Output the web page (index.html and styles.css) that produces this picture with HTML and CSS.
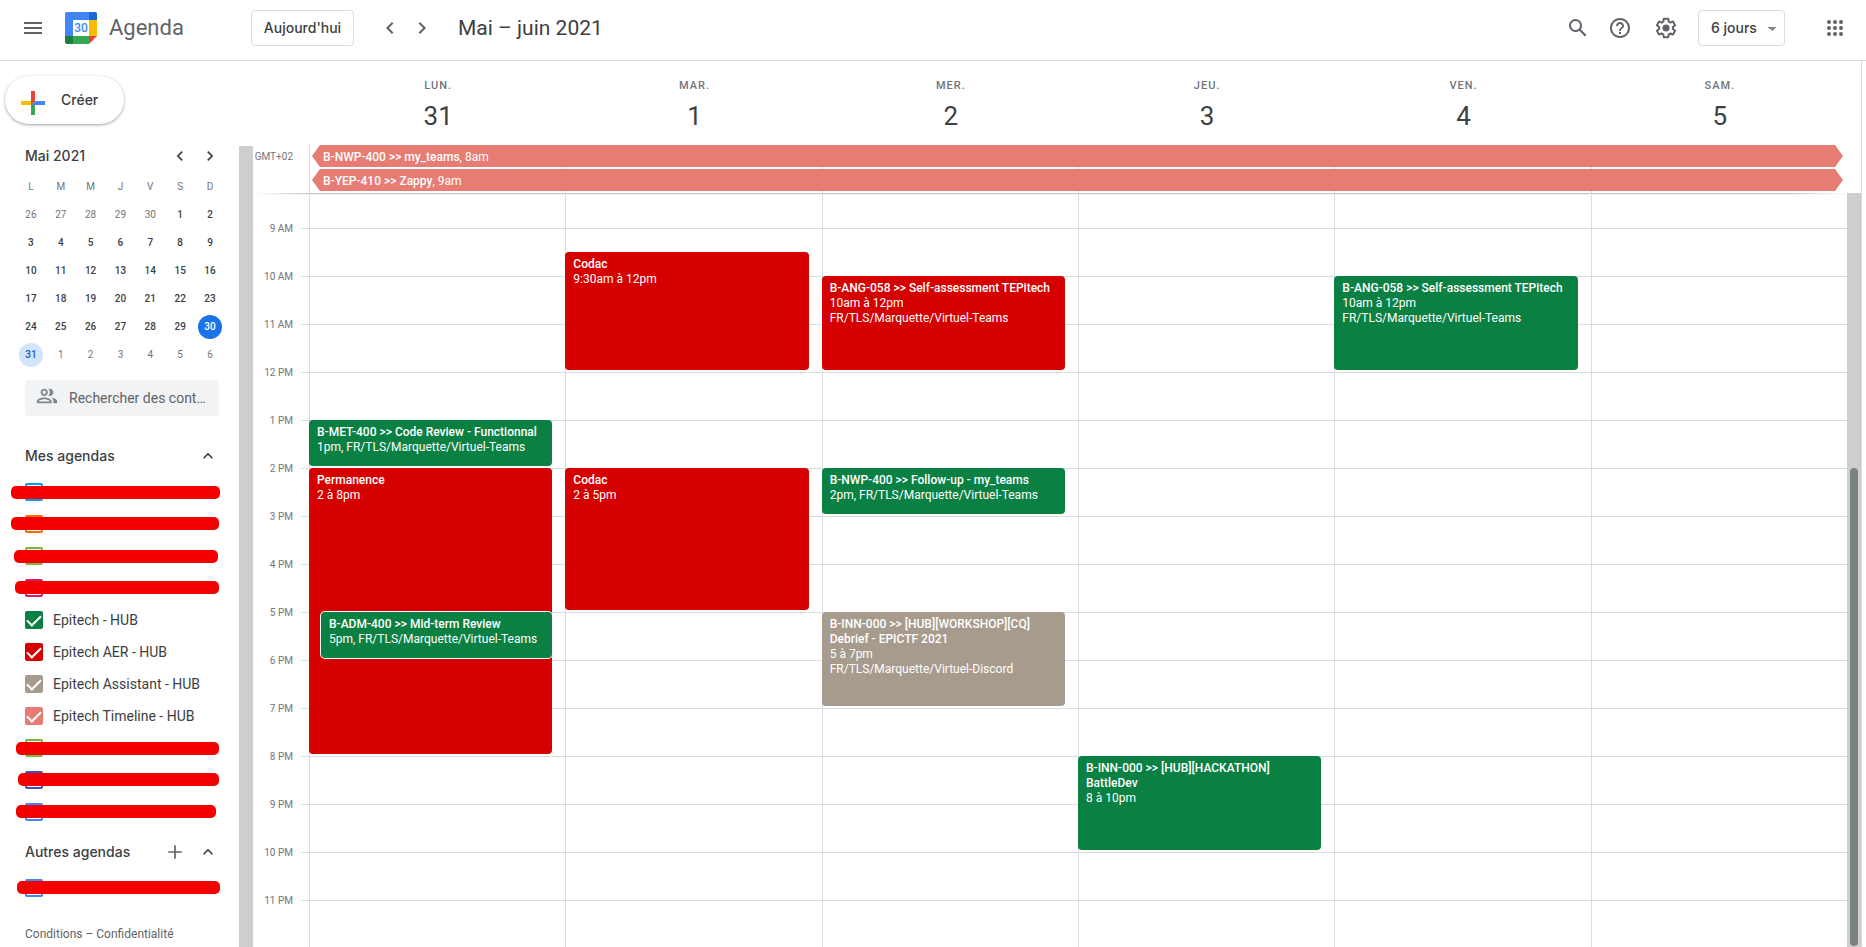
FILE: index.html
```html
<!DOCTYPE html>
<html lang="fr">
<head>
<meta charset="utf-8">
<title>Agenda – Mai – juin 2021</title>
<meta name="viewport" content="width=device-width, initial-scale=1">
<link rel="stylesheet" href="styles.css">
</head>
<body>
<header class="topbar">
  <button class="icon-btn menu-btn" aria-label="Menu principal">
    <svg viewBox="0 0 24 24"><path d="M3 18h18v-2H3v2zm0-5h18v-2H3v2zm0-7v2h18V6H3z"/></svg>
  </button>
  <svg class="logo" viewBox="0 0 32 32" aria-hidden="true">
    <path fill="#4285f4" d="M2 0h22v8H8v16H0V2a2 2 0 0 1 2-2z"/>
    <path fill="#1967d2" d="M24 0h6a2 2 0 0 1 2 2v6h-8z"/>
    <path fill="#fbbc04" d="M24 8h8v16h-8z"/>
    <path fill="#34a853" d="M8 24h16v8H8z"/>
    <path fill="#188038" d="M0 24h8v8H2a2 2 0 0 1-2-2z"/>
    <path fill="#ea4335" d="M24 24h8l-8 8z"/>
    <path fill="#fff" d="M8 8h16v16H8z"/>
    <text class="logo-text" x="16" y="20" text-anchor="middle">30</text>
  </svg>
  <span class="brand">Agenda</span>
  <button class="today-btn">Aujourd'hui</button>
  <div class="pager">
    <button class="icon-btn" aria-label="Période précédente"><svg viewBox="0 0 24 24"><path d="M15.41 7.41L14 6l-6 6 6 6 1.41-1.41L10.83 12z"/></svg></button>
    <button class="icon-btn" aria-label="Période suivante"><svg viewBox="0 0 24 24"><path d="M10 6L8.59 7.41 13.17 12l-4.58 4.59L10 18l6-6z"/></svg></button>
  </div>
  <h1 class="period">Mai – juin 2021</h1>
  <div class="tools">
    <button class="icon-btn" aria-label="Rechercher"><svg viewBox="0 0 24 24"><path d="M20.49 19l-5.73-5.73C15.53 12.2 16 10.91 16 9.5A6.5 6.5 0 1 0 9.5 16c1.41 0 2.7-.47 3.77-1.24L19 20.49 20.49 19zM5 9.5C5 7.01 7.01 5 9.5 5S14 7.01 14 9.5 11.99 14 9.5 14 5 11.99 5 9.5z"/></svg></button>
    <button class="icon-btn help-btn" aria-label="Aide"><svg viewBox="0 0 24 24"><path d="M11 18h2v-2h-2v2zm1-16C6.48 2 2 6.48 2 12s4.48 10 10 10 10-4.480 10-10S17.520 2 12 2zm0 18c-4.410 0-8-3.590-8-8s3.590-8 8-8 8 3.590 8 8-3.590 8-8 8zm0-14c-2.210 0-4 1.790-4 4h2c0-1.100.9-2 2-2s2 .9 2 2c0 2-3 1.750-3 5h2c0-2.250 3-2.500 3-5 0-2.210-1.790-4-4-4z"/></svg></button>
    <button class="icon-btn gear-btn" aria-label="Paramètres"><svg viewBox="0 0 24 24"><path d="M13.85 22.250h-3.700c-.74 0-1.360-.54-1.450-1.270l-.27-1.890c-.27-.14-.53-.29-.79-.46l-1.800.72c-.7.260-1.470-.03-1.810-.65L2.200 15.530c-.35-.66-.2-1.440.36-1.880l1.530-1.190c-.01-.15-.02-.3-.02-.46 0-.15.01-.31.02-.46l-1.520-1.190c-.59-.45-.74-1.260-.37-1.880l1.850-3.190c.34-.62 1.110-.9 1.790-.63l1.810.73c.26-.17.52-.32.78-.46l.27-1.910c.09-.7.710-1.250 1.440-1.250h3.700c.74 0 1.360.54 1.450 1.270l.27 1.890c.27.14.53.29.79.46l1.800-.72c.71-.26 1.480.03 1.820.65l1.840 3.180c.36.66.2 1.440-.36 1.880l-1.520 1.190c.01.15.02.3.02.46s-.01.31-.02.46l1.520 1.190c.56.45.72 1.230.37 1.860l-1.860 3.220c-.34.62-1.110.9-1.800.63l-1.800-.72c-.26.17-.52.32-.78.46l-.27 1.910c-.1.680-.72 1.220-1.460 1.220zm-3.230-2h2.760l.37-2.550.53-.22c.44-.18.88-.44 1.340-.78l.45-.34 2.380.96 1.380-2.400-2.030-1.580.07-.56c.03-.26.06-.51.06-.78s-.03-.53-.06-.78l-.07-.56 2.030-1.580-1.390-2.400-2.390.96-.45-.35c-.42-.32-.87-.58-1.330-.77l-.52-.22-.37-2.550h-2.760l-.37 2.550-.53.21c-.44.19-.88.44-1.340.79l-.45.33-2.380-.95-1.390 2.390 2.030 1.580-.07.56a7 7 0 0 0-.06.79c0 .26.02.53.06.78l.07.56-2.030 1.580 1.380 2.400 2.390-.96.45.35c.43.33.86.58 1.330.77l.53.22.38 2.550z"/><circle cx="12" cy="12" r="3.500"/></svg></button>
    <select class="view-select" aria-label="Affichage"><option>6 jours</option></select>
    <button class="icon-btn apps-btn" aria-label="Applications Google"><svg viewBox="0 0 24 24"><path d="M6 8a2 2 0 1 0 0-4 2 2 0 0 0 0 4zm6 12a2 2 0 1 0 0-4 2 2 0 0 0 0 4zm-6 0a2 2 0 1 0 0-4 2 2 0 0 0 0 4zm0-6a2 2 0 1 0 0-4 2 2 0 0 0 0 4zm6 0a2 2 0 1 0 0-4 2 2 0 0 0 0 4zm6-10a2 2 0 1 0 0 4 2 2 0 0 0 0-4zm-6 4a2 2 0 1 0 0-4 2 2 0 0 0 0 4zm6 6a2 2 0 1 0 0-4 2 2 0 0 0 0 4zm0 6a2 2 0 1 0 0-4 2 2 0 0 0 0 4z"/></svg></button>
  </div>
</header>

<div class="layout">
  <aside class="side">
    <button class="create-btn">
      <svg viewBox="0 0 36 36" aria-hidden="true"><path fill="#34a853" d="M16 16v14h4V20z"/><path fill="#4285f4" d="M30 16H20l-4 4h14z"/><path fill="#fbbc05" d="M6 16v4h10l4-4z"/><path fill="#ea4335" d="M20 16V6h-4v14z"/></svg>
      <span>Créer</span>
    </button>
    <div class="side-row">
      <div class="side-main">
        <div class="mini-head">
          <h2 class="side-title">Mai 2021</h2>
          <button class="mini-nav" aria-label="Mois précédent"><svg viewBox="0 0 24 24"><path d="M15.41 7.41L14 6l-6 6 6 6 1.41-1.41L10.83 12z"/></svg></button>
          <button class="mini-nav" aria-label="Mois suivant"><svg viewBox="0 0 24 24"><path d="M10 6L8.59 7.41 13.17 12l-4.58 4.59L10 18l6-6z"/></svg></button>
        </div>
        <table class="mini">
          <thead><tr><th>L</th><th>M</th><th>M</th><th>J</th><th>V</th><th>S</th><th>D</th></tr></thead>
          <tbody>
            <tr><td class="out">26</td><td class="out">27</td><td class="out">28</td><td class="out">29</td><td class="out">30</td><td>1</td><td>2</td></tr>
            <tr><td>3</td><td>4</td><td>5</td><td>6</td><td>7</td><td>8</td><td>9</td></tr>
            <tr><td>10</td><td>11</td><td>12</td><td>13</td><td>14</td><td>15</td><td>16</td></tr>
            <tr><td>17</td><td>18</td><td>19</td><td>20</td><td>21</td><td>22</td><td>23</td></tr>
            <tr><td>24</td><td>25</td><td>26</td><td>27</td><td>28</td><td>29</td><td><span class="day today">30</span></td></tr>
            <tr><td><span class="day picked">31</span></td><td class="out">1</td><td class="out">2</td><td class="out">3</td><td class="out">4</td><td class="out">5</td><td class="out">6</td></tr>
          </tbody>
        </table>
        <label class="people">
          <svg viewBox="0 0 24 24" aria-hidden="true"><path d="M9 12c2.210 0 4-1.790 4-4s-1.790-4-4-4-4 1.790-4 4 1.790 4 4 4zm0-6c1.100 0 2 .9 2 2s-.9 2-2 2-2-.9-2-2 .9-2 2-2zm0 7.500c-2.670 0-8 1.340-8 4V20h16v-2.500c0-2.660-5.330-4-8-4zM3 18v-.5c.2-.71 3.300-2 6-2s5.800 1.290 6 2v.5H3zM15 12c2.210 0 4-1.790 4-4s-1.790-4-4-4c-.47 0-.91.1-1.330.24A5.980 5.980 0 0 1 15 8c0 1.420-.5 2.730-1.330 3.760.42.14.86.24 1.330.24zM16.700 13.600C18.060 14.500 19 15.800 19 17.500V20h4v-2.500c0-2.180-3.600-3.480-6.300-3.900z"/></svg>
          <input type="text" placeholder="Rechercher des contacts" aria-label="Rechercher des contacts">
        </label>

        <div class="group-head">
          <h2 class="side-title">Mes agendas</h2>
          <button class="group-btn" aria-label="Réduire Mes agendas"><svg viewBox="0 0 24 24"><path d="M12 8l-6 6 1.410 1.410L12 10.830l4.590 4.580L18 14z"/></svg></button>
        </div>
        <ul class="cals">
          <li class="bar-a"><input type="checkbox" class="box sky" aria-label="Agenda masqué 1"></li>
          <li class="bar-b"><input type="checkbox" class="box orange" aria-label="Agenda masqué 2"></li>
          <li class="bar-c"><input type="checkbox" class="box lime" aria-label="Agenda masqué 3"></li>
          <li class="bar-d"><input type="checkbox" class="box pink" aria-label="Agenda masqué 4"></li>
          <li><input type="checkbox" class="box green" id="c5" checked><label for="c5">Epitech - HUB</label></li>
          <li><input type="checkbox" class="box red" id="c6" checked><label for="c6">Epitech AER - HUB</label></li>
          <li><input type="checkbox" class="box taupe" id="c7" checked><label for="c7">Epitech Assistant - HUB</label></li>
          <li><input type="checkbox" class="box coral" id="c8" checked><label for="c8">Epitech Timeline - HUB</label></li>
          <li class="bar-e"><input type="checkbox" class="box lime" aria-label="Agenda masqué 5"></li>
          <li class="bar-f"><input type="checkbox" class="box indigo" aria-label="Agenda masqué 6"></li>
          <li class="bar-g"><input type="checkbox" class="box blue" aria-label="Agenda masqué 7"></li>
        </ul>
        <div class="group-head others">
          <h2 class="side-title">Autres agendas</h2>
          <button class="group-btn add" aria-label="Ajouter d'autres agendas"><svg viewBox="0 0 24 24"><path d="M20 13h-7v7h-2v-7H4v-2h7V4h2v7h7v2z"/></svg></button>
          <button class="group-btn" aria-label="Réduire Autres agendas"><svg viewBox="0 0 24 24"><path d="M12 8l-6 6 1.410 1.410L12 10.830l4.590 4.580L18 14z"/></svg></button>
        </div>
        <ul class="cals">
          <li class="bar-h"><input type="checkbox" class="box blue" aria-label="Agenda masqué 8"></li>
        </ul>
        <p class="legal"><a href="#conditions">Conditions</a> – <a href="#confidentialite">Confidentialité</a></p>
      </div>
      <div class="side-track"></div>
    </div>
  </aside>

  <main class="cal">
    <div class="days">
      <div class="dow first">Lun.<b>31</b></div>
      <div class="dow">Mar.<b>1</b></div>
      <div class="dow">Mer.<b>2</b></div>
      <div class="dow">Jeu.<b>3</b></div>
      <div class="dow">Ven.<b>4</b></div>
      <div class="dow">Sam.<b>5</b></div>
    </div>
    <div class="allday">
      <span class="tz">GMT+02</span>
      <i class="lane l1"></i><i class="lane l2"></i><i class="lane l3"></i><i class="lane l4"></i><i class="lane l5"></i><i class="lane l6"></i>
      <div class="span-ev s1"><strong>B-NWP-400 &gt;&gt; my_teams</strong>, 8am</div>
      <div class="span-ev s2"><strong>B-YEP-410 &gt;&gt; Zappy</strong>, 9am</div>
    </div>
    <div class="scroll">
      <ol class="hours">
        <li>9 AM</li><li>10 AM</li><li>11 AM</li><li>12 PM</li><li>1 PM</li><li>2 PM</li><li>3 PM</li><li>4 PM</li><li>5 PM</li><li>6 PM</li><li>7 PM</li><li>8 PM</li><li>9 PM</li><li>10 PM</li><li>11 PM</li>
      </ol>
      <div class="grid">
        <div class="col">
          <div class="ev green" style="grid-row:10 / span 2"><strong>B-MET-400 &gt;&gt; Code Review - Functionnal</strong><span>1pm, FR/TLS/Marquette/Virtuel-Teams</span></div>
          <div class="ev red" style="grid-row:12 / span 12"><strong>Permanence</strong><span>2 à 8pm</span></div>
          <div class="ev green nested" style="grid-row:18 / span 2"><strong>B-ADM-400 &gt;&gt; Mid-term Review</strong><span>5pm, FR/TLS/Marquette/Virtuel-Teams</span></div>
        </div>
        <div class="col">
          <div class="ev red" style="grid-row:3 / span 5"><strong>Codac</strong><span>9:30am à 12pm</span></div>
          <div class="ev red" style="grid-row:12 / span 6"><strong>Codac</strong><span>2 à 5pm</span></div>
        </div>
        <div class="col">
          <div class="ev red" style="grid-row:4 / span 4"><strong>B-ANG-058 &gt;&gt; Self-assessment TEPitech</strong><span>10am à 12pm</span><span>FR/TLS/Marquette/Virtuel-Teams</span></div>
          <div class="ev green" style="grid-row:12 / span 2"><strong>B-NWP-400 &gt;&gt; Follow-up - my_teams</strong><span>2pm, FR/TLS/Marquette/Virtuel-Teams</span></div>
          <div class="ev taupe" style="grid-row:18 / span 4"><strong>B-INN-000 &gt;&gt; [HUB][WORKSHOP][CQ] Debrief - EPICTF 2021</strong><span>5 à 7pm</span><span>FR/TLS/Marquette/Virtuel-Discord</span></div>
        </div>
        <div class="col">
          <div class="ev green" style="grid-row:24 / span 4"><strong>B-INN-000 &gt;&gt; [HUB][HACKATHON] BattleDev</strong><span>8 à 10pm</span></div>
        </div>
        <div class="col">
          <div class="ev green" style="grid-row:4 / span 4"><strong>B-ANG-058 &gt;&gt; Self-assessment TEPitech</strong><span>10am à 12pm</span><span>FR/TLS/Marquette/Virtuel-Teams</span></div>
        </div>
        <div class="col"></div>
      </div>
      <div class="track"><div class="thumb"></div></div>
    </div>
  </main>
</div>
</body>
</html>
```
FILE: styles.css
```css
* { box-sizing: border-box; }

:root {
  --line: #dadce0;
  --ink: #3c4043;
  --muted: #70757a;
  --icon: #5f6368;
  --display: Inter, Roboto, sans-serif;
  --green: #0b8043;
  --red: #d50000;
  --taupe: #a79b8e;
  --coral: #e67c73;
}

body {
  margin: 0;
  height: 100vh;
  display: flex;
  flex-direction: column;
  overflow: hidden;
  background: #fff;
  color: var(--ink);
  font: 14px/20px Roboto, "Liberation Sans", sans-serif;
}

h1, h2, p, ul, ol { margin: 0; padding: 0; font-weight: 400; list-style: none; }

button {
  border: 0;
  padding: 0;
  background: none;
  color: inherit;
  font: inherit;
  cursor: pointer;
}

svg { display: block; fill: var(--icon); }

/* Top bar */
.topbar {
  flex: none;
  height: 61px;
  display: flex;
  align-items: center;
  padding: 0 15px 4px 17px;
  border-bottom: 1px solid var(--line);
}
.icon-btn { width: 32px; height: 32px; display: grid; place-items: center; }
.icon-btn svg { width: 24px; height: 24px; }
.logo { width: 32px; height: 32px; margin-left: 16px; }
.logo-text { fill: #4285f4; font: 500 12px Roboto, sans-serif; }
.brand { width: 142px; margin-left: 12px; color: var(--icon); font: 22px/28px Roboto, sans-serif; }
.today-btn {
  height: 36px;
  width: 103px;
  border: 1px solid var(--line);
  border-radius: 4px;
  font: 500 14px/20px var(--display);
}
.pager { display: flex; margin-left: 20px; }
.period { margin-left: 20px; font: 21px/28px Roboto, sans-serif; }
.tools { margin-left: auto; display: flex; align-items: center; }
.help-btn { margin-left: 10px; }
.gear-btn { margin-left: 14px; }
.view-select {
  appearance: none;
  width: 87px;
  height: 36px;
  margin: 0 34px 0 16px;
  padding: 0 12px;
  border: 1px solid var(--line);
  border-radius: 4px;
  background:
    conic-gradient(from -45deg at 50% 100%, #80868b 90deg, transparent 0) 69px 16px / 8px 4px no-repeat,
    #fff;
  background:
    linear-gradient(to top right, #80868b 50%, transparent 50%) 73px 16px / 4px 4px no-repeat,
    linear-gradient(to top left, #80868b 50%, transparent 50%) 69px 16px / 4px 4px no-repeat,
    #fff;
  background:
    conic-gradient(from -45deg at 50% 100%, #80868b 90deg, transparent 0) 69px 16px / 8px 4px no-repeat,
    #fff;
  color: var(--ink);
  font: 500 14px/20px var(--display);
}

/* Sidebar */
.layout { flex: 1; min-height: 0; display: flex; }
.side { flex: none; width: 253px; display: flex; flex-direction: column; }
.create-btn {
  flex: none;
  align-self: flex-start;
  display: flex;
  align-items: center;
  height: 48px;
  width: 119px;
  margin: 15px 0 21px 5px;
  padding-left: 10px;
  border-radius: 24px;
  box-shadow: 0 1px 2px rgba(60, 64, 67, .3), 0 1px 3px 1px rgba(60, 64, 67, .15);
  font: 500 14px/20px var(--display);
}
.create-btn svg { width: 36px; height: 36px; margin: 6px 10px 0 0; }
.side-row { flex: 1; min-height: 0; display: flex; justify-content: space-between; }
.side-main { width: 225px; padding-left: 16px; }
.side-track { width: 14px; margin-top: 1px; background: #cecece; }
.side-title { flex: 1; font: 500 14px/20px var(--display); color: var(--ink); }
.mini-head { display: flex; align-items: center; height: 22px; padding-left: 9px; }
.mini-nav { width: 30px; height: 20px; display: grid; place-items: center; }
.mini-nav svg { width: 20px; height: 20px; fill: var(--ink); }

.mini {
  width: 100%;
  margin-top: 6px;
  border-collapse: collapse;
  table-layout: fixed;
  font-size: 10px;
  line-height: 24px;
  text-align: center;
}
.mini th, .mini td { height: 28px; padding: 0; font-weight: 500; }
.mini th, .mini .out { color: var(--muted); font-weight: 400; }
.day { display: block; width: 24px; height: 24px; margin: 0 auto; border-radius: 50%; }
.today { background: #1a73e8; color: #fff; }
.picked { background: #d2e3fc; color: #185abc; }

.people {
  display: flex;
  align-items: center;
  height: 36px;
  margin: 11px 6px 0 9px;
  padding: 0 12px 0 11px;
  border-radius: 4px;
  background: #f1f3f4;
}
.people svg { flex: none; width: 22px; height: 22px; margin-top: -4px; fill: #80868b; }
.people input {
  flex: 1;
  min-width: 0;
  margin-left: 11px;
  padding: 0;
  border: 0;
  background: none;
  color: var(--ink);
  font: inherit;
  text-overflow: ellipsis;
}
.people input::placeholder { color: var(--icon); opacity: 1; }

.group-head { display: flex; align-items: center; height: 40px; margin-top: 20px; padding: 0 7px 0 9px; }
.group-head.others { height: 32px; margin-top: 8px; }
.group-btn { width: 20px; height: 20px; }
.group-btn svg { width: 20px; height: 20px; fill: var(--ink); }
.group-btn.add { margin-right: 13px; }
.group-btn.add svg { fill: var(--icon); }

.cals li { position: relative; display: flex; align-items: center; height: 32px; padding-left: 9px; }
.others + .cals { margin-top: 4px; }
.cals label { margin-left: 10px; }
.box {
  --tone: #4285f4;
  appearance: none;
  width: 18px;
  height: 18px;
  margin: 0;
  border: 2px solid var(--tone);
  border-radius: 2px;
  background: #fff;
}
.box:checked { display: grid; place-items: center; background: var(--tone); }
.box:checked::after {
  content: "";
  width: 6px;
  height: 12px;
  margin-top: -3px;
  border: solid #fff;
  border-width: 0 2px 2px 0;
  rotate: 45deg;
}
.box.sky { --tone: #039be5; }
.box.orange { --tone: #ef6c00; }
.box.lime { --tone: #7cb342; }
.box.pink { --tone: #d81b60; }
.box.indigo { --tone: #3f51b5; }
.box.green { --tone: var(--green); }
.box.red { --tone: var(--red); }
.box.taupe { --tone: var(--taupe); }
.box.coral { --tone: var(--coral); }

/* Marker strokes drawn over the hidden calendar names */
[class^="bar-"]::after {
  content: "";
  position: absolute;
  height: 13px;
  top: 10px;
  left: 0;
  right: 6px;
  border-radius: 5px;
  background: #f50000;
}
.bar-a::after { left: -5px; right: 5px; }
.bar-b::after { left: -5px; top: 9px; }
.bar-c::after { left: -2px; right: 7px; }
.bar-d::after { left: -1px; top: 9px; }
.bar-f::after { left: 2px; top: 9px; }
.bar-g::after { right: 9px; top: 9px; }
.bar-h::after { left: 1px; right: 5px; top: 9px; }

.legal { margin-top: 20px; padding-left: 9px; font-size: 12px; color: var(--icon); }
.legal a { color: inherit; text-decoration: none; }

/* Week view */
.cal {
  flex: 1;
  min-width: 0;
  display: flex;
  flex-direction: column;
  margin-right: 4px;
  border-right: 1px solid var(--line);
}
.days, .allday {
  flex: none;
  display: grid;
  grid-template-columns: 56px repeat(6, 1fr);
  padding-right: 14px;
}
.days { height: 84px; padding-top: 15px; }
.dow {
  padding-left: 2px;
  color: var(--muted);
  font-size: 11px;
  font-weight: 500;
  line-height: 20px;
  letter-spacing: 1px;
  text-align: center;
  text-transform: uppercase;
}
.dow.first { grid-column: 2; }
.dow b {
  display: block;
  margin-top: 2px;
  color: var(--ink);
  font-size: 26px;
  font-weight: 400;
  line-height: 36px;
  letter-spacing: 0;
}
.allday { grid-template-rows: 24px 24px; }
.tz { grid-area: 1 / 1; padding-right: 16px; color: var(--muted); font-size: 10px; line-height: 24px; text-align: right; }
.lane { grid-row: 1 / 3; border-left: 1px solid var(--line); }
.l1 { grid-column: 2; }
.l2 { grid-column: 3; }
.l3 { grid-column: 4; }
.l4 { grid-column: 5; }
.l5 { grid-column: 6; }
.l6 { grid-column: 7; }
.span-ev {
  grid-column: 2 / 8;
  height: 22px;
  margin: 0 4px 0 3px;
  padding-left: 11px;
  background: var(--coral);
  clip-path: polygon(8px 0, calc(100% - 8px) 0, 100% 50%, calc(100% - 8px) 100%, 8px 100%, 0 50%);
  color: #fff;
  font-size: 12px;
  line-height: 24px;
}
.s1 { grid-row: 1; }
.s2 { grid-row: 2; }
strong { font-weight: 500; }

.scroll { position: relative; flex: 1; min-height: 0; display: flex; overflow: hidden; }
.scroll::before {
  content: "";
  position: absolute;
  top: 0;
  left: 0;
  right: 14px;
  height: 2px;
  background: linear-gradient(#c4c7ca 50%, #f1f1f1 50%);
  mask-image: linear-gradient(90deg, transparent, #000 56px, #000 calc(100% - 56px), transparent);
}
.hours {
  flex: none;
  width: 48px;
  padding: 12px 8px 0 0;
  color: var(--muted);
  font-size: 10px;
  line-height: 48px;
  text-align: right;
}
.grid {
  flex: 1;
  display: grid;
  grid-template-columns: repeat(6, 1fr);
  padding-left: 8px;
  background: linear-gradient(var(--line) 1px, transparent 1px) 0 35px / 100% 48px;
}
.col {
  min-width: 0;
  display: grid;
  grid-template-rows: 35px repeat(32, 24px);
  border-left: 1px solid var(--line);
}
.ev {
  grid-column: 1;
  margin: 0 13px 2px -1px;
  padding: 5px 8px 0;
  border-radius: 4px;
  color: #fff;
  font-size: 12px;
  line-height: 15px;
  overflow: hidden;
}
.ev strong, .ev span { display: block; }
.ev.nested { margin-left: 11px; box-shadow: 0 0 0 1px #fff; }
.ev.green { background: var(--green); }
.ev.red { background: var(--red); }
.ev.taupe { background: var(--taupe); }

.track { flex: none; width: 14px; padding: 275px 3px 1px; background: #cecece; }
.thumb { height: 100%; border-radius: 4px; background: #7c8182; }
```
